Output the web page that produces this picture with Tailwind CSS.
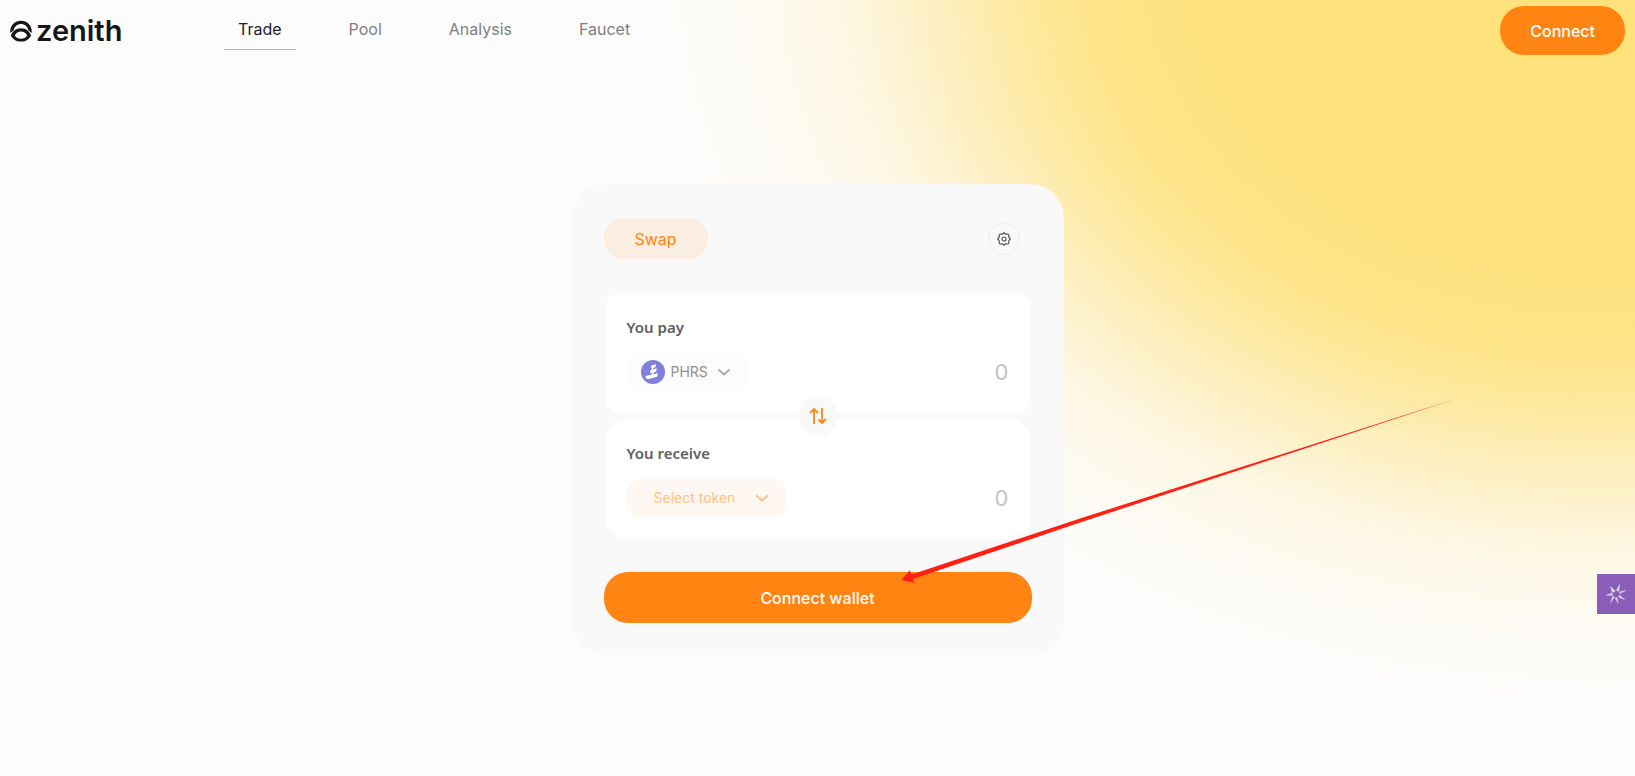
<!DOCTYPE html>
<html lang="en">
<head>
    <meta charset="UTF-8">
    <meta name="viewport" content="width=device-width, initial-scale=1.0">
    <title>Zenith Swap</title>
    <script src="https://cdn.jsdelivr.net/npm/@tailwindcss/browser@4"></script>
</head>
<body class="relative min-h-screen overflow-x-hidden bg-[#fcfcfc] bg-[radial-gradient(960px_760px_at_1600px_-50px,#ffe27c_0%,#ffe27e_42%,#fee488_53%,#fee9a0_61%,#fdefc0_69%,#fdf6e0_78%,#fcfaf2_88%,#fcfcfc_100%)] bg-no-repeat font-['Inter',sans-serif] text-base">
    <header class="flex h-[61px] items-center justify-between px-[10px]">
        <div class="flex items-center">
            <a href="#" class="flex w-[214px] items-center gap-1 text-[#161616]">
                <svg class="size-[22px]" viewBox="0 0 22 22" fill="none" aria-hidden="true">
                    <path d="M.3 13C-.4 6 4.500.8 11 .8S22.400 6 21.700 13L18.300 10.200C17.300 6.200 14.700 4 11 4S4.700 6.200 3.700 10.200z" fill="currentColor"/>
                    <path fill-rule="evenodd" d="M.9 15.500C2.500 11 6.300 8.200 11 8.200s8.500 2.800 10.100 7.300C19.400 19.300 15.700 21.600 11 21.600S2.600 19.300.9 15.500zM4.800 15.500C6.100 17.600 8.200 18.700 11 18.700s4.900-1.100 6.200-3.200C15.900 12.800 13.800 11.500 11 11.500S6.100 12.800 4.800 15.500z" fill="currentColor"/>
                </svg>
                <span class="text-[29px] leading-9 font-semibold">zenith</span>
            </a>
            <nav class="flex gap-[39px] text-[#808080]">
                <a href="#" class="border-b border-[#f2ac55] px-3.5 pt-1.5 pb-2 text-[#222]">Trade</a>
                <a href="#" class="border-b border-transparent px-3.5 pt-1.5 pb-2">Pool</a>
                <a href="#" class="border-b border-transparent px-3.5 pt-1.5 pb-2">Analysis</a>
                <a href="#" class="border-b border-transparent px-3.5 pt-1.5 pb-2">Faucet</a>
            </nav>
        </div>
        <button class="h-[49px] rounded-3xl bg-[#ff8412] px-[30px] font-medium text-white">Connect</button>
    </header>

    <main class="flex justify-center pt-[123px] pb-10">
        <div class="relative w-full max-w-[492px] rounded-[34px] bg-[#f9f9f9] px-8 pt-[34px] pb-8">
            <div class="flex items-center justify-between pr-3">
                <button class="h-[41px] rounded-[20px] bg-[#faede2] px-[31px] text-[#ff8412]">Swap</button>
                <button aria-label="Settings" class="flex size-8 items-center justify-center rounded-full border border-[#eeeeee] text-[#555]">
                    <svg class="size-3.5" viewBox="0 0 14 14" fill="none" stroke="currentColor" stroke-width="1.200" stroke-linejoin="round">
                        <path d="M7 .7 8.700 2.200 11 2 11.800 3.200 11.800 5.300 13.300 7 11.800 8.700 11.800 10.800 11 12 8.700 11.800 7 13.300 5.300 11.800 3 12 2.200 10.800 2.200 8.700.7 7 2.200 5.300 2.200 3.200 3 2 5.300 2.200z"/>
                        <circle cx="7" cy="7" r="2"/>
                    </svg>
                </button>
            </div>

            <div class="relative mx-px mt-[34px] flex flex-col gap-1.5">
                <section class="rounded-2xl bg-white p-[22px]">
                    <label for="pay" class="block font-['Noto_Sans',sans-serif] text-[15px] leading-6 font-semibold text-[#606060]">You pay</label>
                    <div class="mt-3.5 flex items-center justify-between">
                        <button class="flex h-[38px] items-center rounded-xl bg-[#fcfcfc] pr-[18px] pl-3.5 text-sm text-[#909090]">
                            <svg class="mr-1.5 size-6" viewBox="0 0 24 24" aria-hidden="true">
                                <circle cx="12" cy="12" r="12" fill="#8080dc"/>
                                <path d="M10.300 5.500l4.500-1.200-.3 3-4.200.9zM9.200 10.200l6.600-1.900-.7 3.400-5.900 1.500zM5.200 18.600c-.8-.7-.8-2.300.1-2.800l11.800-2.600-1.100 3.600-8.600 2.400z" fill="#fff"/>
                                <path d="M12 7l-1 3.500M13 11l-2.500 5" stroke="#fff" stroke-width="1.200"/>
                            </svg>
                            PHRS
                            <svg class="ml-2.5 size-3" viewBox="0 0 12 12" fill="none" stroke="#aaa" stroke-width="2" stroke-linecap="round" stroke-linejoin="round"><path d="M1 4l5 4.500L11 4"/></svg>
                        </button>
                        <input id="pay" type="text" placeholder="0" class="w-40 text-right text-[22px] leading-7 outline-none placeholder:text-[#c4c4c4]">
                    </div>
                </section>

                <section class="rounded-3xl bg-white p-[22px]">
                    <label for="receive" class="block font-['Noto_Sans',sans-serif] text-[15px] leading-6 font-semibold text-[#606060]">You receive</label>
                    <div class="mt-3.5 flex items-center justify-between">
                        <button class="flex h-[38px] items-center rounded-xl bg-[#fff7f1] pr-[18px] pl-[27px] text-sm text-[#ffc085]">
                            Select token
                            <svg class="ml-[21px] size-3" viewBox="0 0 12 12" fill="none" stroke="currentColor" stroke-width="2" stroke-linecap="round" stroke-linejoin="round"><path d="M1 4l5 4.500L11 4"/></svg>
                        </button>
                        <input id="receive" type="text" placeholder="0" class="w-40 text-right text-[22px] leading-7 outline-none placeholder:text-[#c4c4c4]">
                    </div>
                </section>

                <!-- switch direction -->
                <button aria-label="Switch tokens" class="absolute top-1/2 left-1/2 flex size-10 -translate-1/2 items-center justify-center rounded-full bg-[#f9f9f9] text-[#ff8412]">
                    <svg class="size-[18px]" viewBox="0 0 18 18" fill="none" stroke="currentColor" stroke-width="1.800">
                        <path d="M5 17V2M1 6l4-4 4 4M13 1v15M9.500 12.500L13 16l4-4"/>
                    </svg>
                </button>
            </div>

            <button class="mt-[33px] h-[51px] w-full rounded-3xl bg-[#ff8412] font-medium text-white">Connect wallet</button>

            <!-- pointer to the wallet button -->
            <svg class="pointer-events-none absolute top-[212px] left-[328px] h-[190px] w-[560px]" viewBox="0 0 560 190" aria-hidden="true">
                <path d="M1.500 184L9.700 174.300 11.500 178.500 180 122.500 560 1.500 180 126.500 13 183 14.500 187z" fill="#ff2014"/>
            </svg>
        </div>
    </main>

    <button aria-label="Open extension" class="fixed right-0 bottom-[162px] flex h-10 w-[38px] items-center justify-center bg-[#8a5eb8]">
        <svg class="size-5" viewBox="0 0 20 20" fill="#e4d8f0">
            <path d="M9.300 7L4.500 2.500 6.300 8.500zM10.500 6.500L13.500.5 13 7zM13.500 8L19.500 6.500 14 9.500zM13.500 11L18.500 15.500 12.500 13zM11 13.500L12 19 9.200 14zM8.500 13L4.500 18.500 6.800 12.300zM6.500 11.300L.5 11.300 6 9z" stroke="#e4d8f0" stroke-width=".5"/>
        </svg>
    </button>
</body>
</html>
